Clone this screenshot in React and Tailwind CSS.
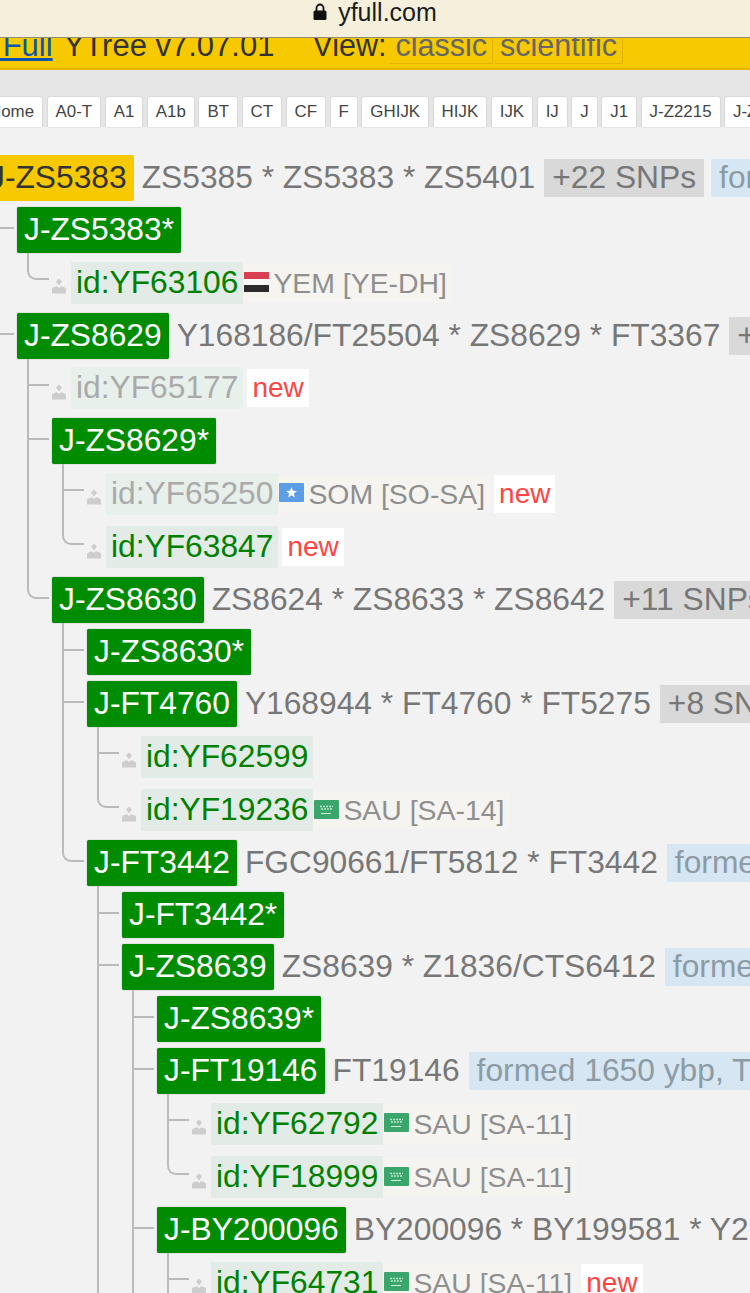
const TABS = ["Home", "A0-T", "A1", "A1b", "BT", "CT", "CF", "F", "GHIJK", "HIJK", "IJK", "IJ", "J", "J1", "J-Z2215", "J-Z1828"];

const TREE = [
  { name: "J-ZS5383*", kids: [{ id: "YF63106", flag: "ye", place: "YEM [YE-DH]" }] },
  {
    name: "J-ZS8629",
    snps: "Y168186/FT25504 * ZS8629 * FT3367",
    chip: "+18 SNPs",
    kids: [
      { id: "YF65177", faded: true, isNew: true },
      {
        name: "J-ZS8629*",
        kids: [
          { id: "YF65250", faded: true, flag: "so", place: "SOM [SO-SA]", isNew: true },
          { id: "YF63847", isNew: true },
        ],
      },
      {
        name: "J-ZS8630",
        snps: "ZS8624 * ZS8633 * ZS8642",
        chip: "+11 SNPs",
        kids: [
          { name: "J-ZS8630*" },
          {
            name: "J-FT4760",
            snps: "Y168944 * FT4760 * FT5275",
            chip: "+8 SNPs",
            kids: [{ id: "YF62599" }, { id: "YF19236", flag: "sa", place: "SAU [SA-14]" }],
          },
          {
            name: "J-FT3442",
            snps: "FGC90661/FT5812 * FT3442",
            formed: "formed 2300 ybp, TMRCA",
            kids: [
              { name: "J-FT3442*" },
              {
                name: "J-ZS8639",
                snps: "ZS8639 * Z1836/CTS6412",
                formed: "formed 2300 ybp, TMRCA",
                open: true,
                kids: [
                  { name: "J-ZS8639*" },
                  {
                    name: "J-FT19146",
                    snps: "FT19146",
                    formed: "formed 1650 ybp, TMRCA",
                    kids: [
                      { id: "YF62792", flag: "sa", place: "SAU [SA-11]" },
                      { id: "YF18999", flag: "sa", place: "SAU [SA-11]" },
                    ],
                  },
                  {
                    name: "J-BY200096",
                    snps: "BY200096 * BY199581 * Y2",
                    open: true,
                    kids: [{ id: "YF64731", flag: "sa", place: "SAU [SA-11]", isNew: true, open: true }],
                  },
                ],
              },
            ],
          },
        ],
      },
    ],
  },
];

function Flag({ code }) {
  if (code === "ye") {
    return (
      <svg width="25" height="20" viewBox="0 0 25 20" className="shrink-0 -mt-[2px]">
        <rect width="25" height="7" fill="#d9404f" />
        <rect y="7" width="25" height="6" fill="#f7f7f7" />
        <rect y="13" width="25" height="7" fill="#2b2b2b" />
      </svg>
    );
  }
  if (code === "so") {
    return (
      <svg width="25" height="19" viewBox="0 0 25 19" className="shrink-0 -mt-[2px]">
        <rect width="25" height="19" rx="1" fill="#5b9ee6" />
        <path d="M12.5 4l1.5 3.8 4 .2-3.1 2.5 1 3.9-3.4-2.2-3.4 2.2 1-3.9L7 8l4-.2z" fill="#fff" />
      </svg>
    );
  }
  return (
    <svg width="25" height="19" viewBox="0 0 25 19" className="shrink-0 -mt-[2px]">
      <rect width="25" height="19" rx="1" fill="#3aa66c" />
      <path d="M6 6.5h13M7 9h11" stroke="#bfe5cf" strokeWidth="1.4" strokeDasharray="2 1" />
      <path d="M7 13.5h10" stroke="#d5efe0" strokeWidth="1" />
    </svg>
  );
}

function Person() {
  return (
    <svg width="14" height="16" viewBox="0 0 14 16" className="shrink-0 mt-[7px]">
      <path d="M7 0.5l3 3-3 4-3-4z" fill="#cdcdcd" />
      <path d="M0 15.5v-4.2c0-1.4 2-2.3 5-3l2 1.7 2-1.7c3 .7 5 1.6 5 3v4.2z" fill="#cdcdcd" />
    </svg>
  );
}

function NewTag() {
  return <span className="ml-[4px] h-[38px] px-[5px] flex items-center bg-white text-[#ff4444] text-[28px]">new</span>;
}

function Leaf({ node }) {
  return (
    <div className="h-[53.5px] flex items-center">
      <Person />
      <span className={`ml-[5px] h-[42px] px-[5px] flex items-center ${node.faded ? "bg-[#e7f0ea] text-[#aaaaaa]" : "bg-[#e2ebe5] text-[#008000]"}`}>
        id:{node.id}
      </span>
      {node.place && (
        <span className="h-[38px] pl-[1px] pr-[5px] flex items-center gap-[4px] bg-[#f5f4f0] text-[#8f8f8f] text-[28.4px]">
          <Flag code={node.flag} />
          {node.place}
        </span>
      )}
      {node.isNew && <NewTag />}
    </div>
  );
}

function Branch({ node, root }) {
  return (
    <div className="h-[52px] flex items-center">
      <span
        className={`h-[46px] px-[7px] flex items-center rounded-[2px] ${
          root ? "bg-[#f7c900] text-[#333333]" : "bg-[#008c00] text-white shadow-[0_0_1px_rgba(0,0,0,0.6)]"
        }`}
      >
        {node.name}
      </span>
      {node.snps && <span className="ml-[8px] text-[#777777]">{node.snps}</span>}
      {node.chip && <span className="ml-[9px] h-[38px] px-[8px] flex items-center bg-[#d9d9d9] text-[#777777]">{node.chip}</span>}
      {node.formed && <span className="ml-[9px] h-[38px] px-[8px] flex items-center bg-[#d6e6f2] text-[#8d9ba5]">{node.formed}</span>}
      {root && (
        <span className="ml-[7px] h-[38px] px-[8px] flex items-center bg-[#d6e6f2] text-[#8d9ba5]">formed 4300 ybp, TMRCA</span>
      )}
    </div>
  );
}

function Child({ node, last }) {
  const isLeaf = Boolean(node.id);
  return (
    <div className="relative pl-[35px]">
      {last && !node.open ? (
        <span
          className={`absolute left-[10px] top-[-3px] w-[22px] border-l-2 border-b-2 border-[#bbbbbb] rounded-bl-[9px] ${
            isLeaf ? "h-[27px]" : "h-[28px]"
          }`}
        />
      ) : (
        <>
          <span className="absolute left-[10px] top-[-3px] bottom-0 w-[2px] bg-[#bbbbbb]" />
          <span className={`absolute left-[10px] w-[22px] h-[2px] bg-[#bbbbbb] ${isLeaf ? "top-[22px]" : "top-[23px]"}`} />
        </>
      )}
      {isLeaf ? <Leaf node={node} /> : <Branch node={node} />}
      {node.kids && <Kids nodes={node.kids} />}
    </div>
  );
}

function Kids({ nodes }) {
  return nodes.map((n, i) => <Child key={n.name || n.id} node={n} last={i === nodes.length - 1} />);
}

export default function App() {
  return (
    <div className="w-[750px] h-[1293px] overflow-hidden bg-[#f2f2f2] font-['Liberation_Sans',Arial,sans-serif] text-[31.75px] leading-none whitespace-nowrap">
      {/* browser address bar, sits over the scrolled page */}
      <div className="relative z-10 h-[38px] bg-[#f5efdc] border-b border-[#8f8a70] flex items-center justify-center gap-[11px] pb-[12px] text-[25px] text-[#1c1c1c]">
        <svg width="14" height="17" viewBox="0 0 14 17" className="shrink-0 -mt-[2px]">
          <path d="M3.5 8V5a3.5 3.5 0 0 1 7 0v3" fill="none" stroke="#111" strokeWidth="1.8" />
          <rect x="0.5" y="7.5" width="13" height="9.5" rx="1.5" fill="#111" />
        </svg>
        yfull.com
      </div>

      {/* yellow site header, top of its text is under the address bar */}
      <div className="h-[32px] bg-[#f7c900] border-b-2 border-[#e3b500] flex items-end text-[30.5px] text-[#333333]">
        <div className="flex items-center -ml-[18px] mb-[4px] h-[34px] shrink-0">
          <span className="pb-[3px] text-[31px] text-[#0a55b0] underline">YFull</span>
          <span className="pb-[3px] ml-[11px] text-[31px]">YTree v7.07.01</span>
          <span className="pb-[3px] ml-[38px]">View:</span>
          <span className="ml-[4px] px-[5px] pb-[3px] h-[34px] flex items-center text-[#666666] border-r border-b border-[#e3b500]">classic</span>
          <span className="ml-[2px] px-[5px] pb-[3px] h-[34px] flex items-center text-[#666666] border-r border-b border-[#e3b500]">scientific</span>
        </div>
      </div>

      {/* haplogroup tabs */}
      <div className="h-[57px] bg-[#e6e6e6] flex items-end">
        <div className="flex gap-[5.5px] -ml-[19px]">
          {TABS.map((t) => (
            <span key={t} className="h-[30px] px-[8px] flex items-center bg-white rounded-t-[2px] text-[16.9px] text-[#444444] shadow-[0_0_2px_rgba(0,0,0,0.2)]">
              {t}
            </span>
          ))}
        </div>
      </div>

      {/* tree */}
      <div className="pt-[25px] -ml-[18px]">
        <Branch root node={{ name: "J-ZS5383", snps: "ZS5385 * ZS5383 * ZS5401", chip: "+22 SNPs" }} />
        <Kids nodes={TREE} />
      </div>
    </div>
  );
}
